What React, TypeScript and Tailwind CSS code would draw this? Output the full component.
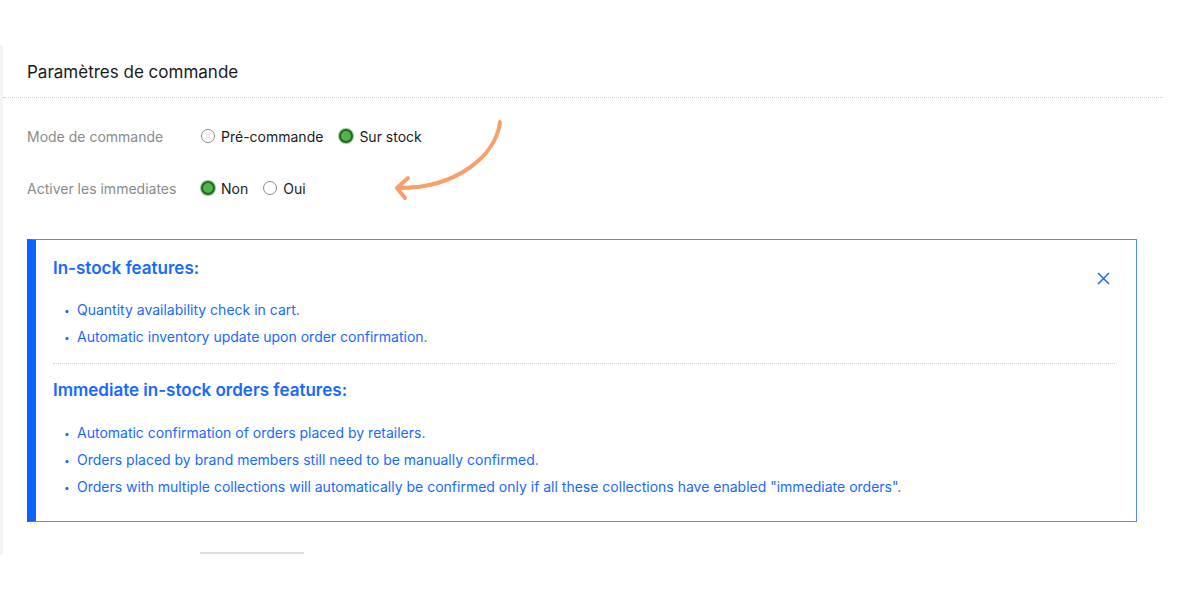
import React from "react";

function Radio({ checked }: { checked: boolean }) {
  return checked ? (
    <span className="inline-block w-[14px] h-[14px] rounded-full bg-[#4cb848] border-2 border-[#2f5e2c] shadow-[0_0_0_1px_#8fd48a]" />
  ) : (
    <span className="inline-block w-[14px] h-[14px] rounded-full bg-white border border-[#8a8a8a]" />
  );
}

function Option({ checked, label }: { checked: boolean; label: string }) {
  return (
    <span className="flex items-center gap-[6px]">
      <Radio checked={checked} />
      <span className="text-[14px] text-[#1a1a1a]">{label}</span>
    </span>
  );
}

function Bullet({ children }: { children: React.ReactNode }) {
  return (
    <li className="flex items-center h-[27px]">
      <span className="w-[24px] pl-[11px] text-[10px] leading-none">•</span>
      <span>{children}</span>
    </li>
  );
}

export default function App() {
  return (
    <div className="w-[1200px] h-[600px] bg-white flex flex-col" style={{ fontFamily: "Inter, 'Noto Sans', sans-serif" }}>
      <div className="h-[45px]" />
      <div className="flex h-[510px]">
        <div className="w-[3px] bg-[#f4f4f4]" />
        <div className="w-[1160px] flex flex-col">
          <div className="h-[52px] flex items-center pl-[24px] pt-[4px] text-[17px] text-[#1a1a1a]">
            Paramètres de commande
          </div>
          <div className="border-t border-dotted border-[#cccccc]" />
          <div className="relative">
            <div className="flex items-center h-[20px] mt-[28px] pl-[24px]">
              <span className="w-[174px] text-[14px] text-[#8a8a8a]">Mode de commande</span>
              <div className="flex items-center gap-[16px]">
                <Option checked={false} label="Pré-commande" />
                <Option checked={true} label="Sur stock" />
              </div>
            </div>
            <div className="flex items-center h-[20px] mt-[32px] pl-[24px]">
              <span className="w-[174px] text-[14px] text-[#8a8a8a]">Activer les immediates</span>
              <div className="flex items-center gap-[15px]">
                <Option checked={true} label="Non" />
                <Option checked={false} label="Oui" />
              </div>
            </div>
            <svg className="absolute left-[383px] top-[18px]" width="125" height="90" viewBox="0 0 125 90" fill="none">
              <path d="M114 6 C 110 40, 70 72, 14 72" stroke="#f7a06a" strokeWidth="4" strokeLinecap="round" fill="none" />
              <path d="M22 62 L 11 72 L 19 82" stroke="#f7a06a" strokeWidth="4" strokeLinecap="round" strokeLinejoin="round" fill="none" />
            </svg>
          </div>
          <div className="ml-[24px] mt-[41px] w-[1110px] h-[283px] border border-[#4d8bff] border-l-[9px] border-l-[#0a63ff] flex flex-col pl-[17px] pr-[19px] relative text-[#1769ff]">
            <svg className="absolute right-[26px] top-[32px]" width="13" height="13" viewBox="0 0 13 13">
              <path d="M1 1 L12 12 M12 1 L1 12" stroke="#1769ff" strokeWidth="1.5" />
            </svg>
            <div className="text-[17px] font-semibold mt-[17px] h-[22px] leading-[22px]">In-stock features:</div>
            <ul className="mt-[17px] text-[14px]">
              <Bullet>Quantity availability check in cart.</Bullet>
              <Bullet>Automatic inventory update upon order confirmation.</Bullet>
            </ul>
            <div className="border-t border-dotted border-[#c8d6f0] mt-[13px]" />
            <div className="text-[17px] font-semibold mt-[15px] h-[22px] leading-[22px]">Immediate in-stock orders features:</div>
            <ul className="mt-[18px] text-[14px]">
              <Bullet>Automatic confirmation of orders placed by retailers.</Bullet>
              <Bullet>Orders placed by brand members still need to be manually confirmed.</Bullet>
              <Bullet>Orders with multiple collections will automatically be confirmed only if all these collections have enabled "immediate orders".</Bullet>
            </ul>
          </div>
          <div className="ml-[197px] mt-[30px] w-[104px] h-[2px] bg-[#dedede]" />
        </div>
      </div>
    </div>
  );
}
